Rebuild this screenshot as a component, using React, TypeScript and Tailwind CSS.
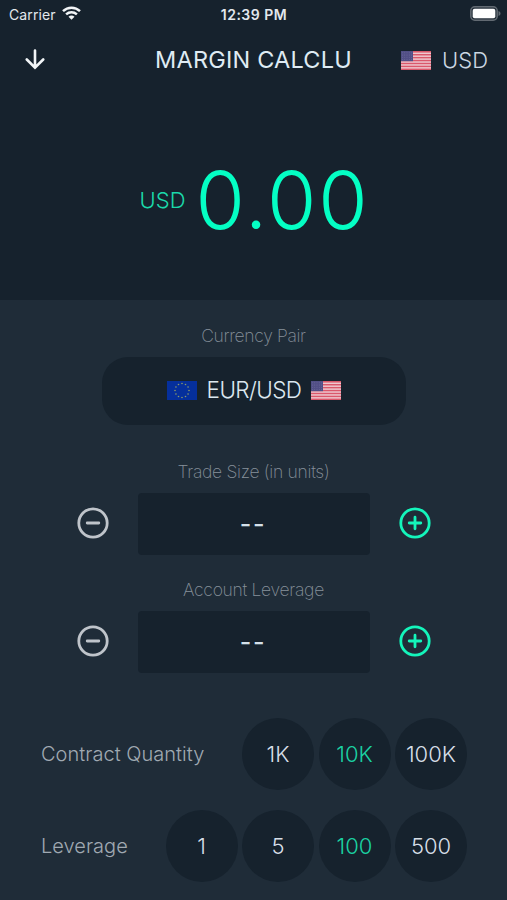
import React from "react";

const stripes = [0, 1, 2, 3, 4, 5, 6];

function UsFlag() {
  return (
    <svg width="30" height="19" viewBox="0 0 30 19" className="block shrink-0">
      <rect width="30" height="19" fill="#f0d3d9" />
      {stripes.map((i) => (
        <rect key={i} y={i * 2.923} width="30" height="1.6" fill="#da586b" />
      ))}
      <rect width="12" height="10.2" fill="#514f86" />
      {[1.8, 4, 6.2, 8.4].map((y) =>
        [1.5, 3.75, 6, 8.25, 10.5].map((x) => (
          <circle key={`${x}-${y}`} cx={x} cy={y} r="0.4" fill="#8583ab" />
        )),
      )}
    </svg>
  );
}

function EuFlag() {
  return (
    <svg width="30" height="19" viewBox="0 0 30 19" className="block shrink-0">
      <rect width="30" height="19" fill="#052f9c" />
      {stripes.concat([7, 8, 9, 10, 11]).map((i) => (
        <circle
          key={i}
          cx={15 + 7 * Math.sin((i * Math.PI) / 6)}
          cy={9.5 - 7 * Math.cos((i * Math.PI) / 6)}
          r="0.8"
          fill="#8c9a68"
        />
      ))}
    </svg>
  );
}

function RoundIcon({ plus }: { plus?: boolean }) {
  return (
    <svg
      width="32"
      height="32"
      viewBox="0 0 32 32"
      fill="none"
      strokeWidth="2.8"
      strokeLinecap="round"
      className={plus ? "block stroke-[#14f5bb]" : "block stroke-[#bfc4ca]"}
    >
      <circle cx="16" cy="16" r="14.2" />
      <path d={plus ? "M10.2 16H21.8M16 10.2V21.8" : "M10.2 16H21.8"} />
    </svg>
  );
}

function Stepper({ label }: { label: string }) {
  return (
    <section>
      <div className="flex h-[42px] items-center justify-center pt-[1px] text-[17.5px] font-extralight tracking-[-0.3px] text-[#87919b]">
        {label}
      </div>
      <div className="flex h-[62px] items-center justify-between pl-[77px] pr-[76px]">
        <button className="-mt-[3px]"><RoundIcon /></button>
        <div className="flex h-[62px] w-[232px] items-center justify-center rounded-[4px] bg-[#16222d] pr-[2px] pt-[1px] text-[25px] font-medium text-[#d5e1ea]">
          <span className="tracking-[1.8px]">--</span>
        </div>
        <button className="-mt-[3px]"><RoundIcon plus /></button>
      </div>
    </section>
  );
}

function Choices({ label, items, active }: { label: string; items: string[]; active: string }) {
  return (
    <div className="flex h-[72px] items-center pl-[41px] pr-[40px]">
      <span className="flex-1 text-[20px] font-[350] tracking-[0.02px] text-[#a0a9b2]">{label}</span>
      <div className="flex gap-[4.5px]">
        {items.map((item) => (
          <button
            key={item}
            className={`flex h-[72px] w-[72px] items-center justify-center rounded-full bg-[#16222d] text-[22px] font-[350] tracking-[0px] ${
              item === active ? "text-[#1bd3a3]" : "text-[#d7dfe8]"
            }`}
          >
            {item}
          </button>
        ))}
      </div>
    </div>
  );
}

export default function App() {
  return (
    <div className="flex h-[900px] w-[507px] flex-col overflow-hidden bg-[#1f2c38] font-['Inter','Liberation_Sans',sans-serif]">
      <div className="h-[300px] bg-[#16222d]">
        <div className="grid h-7 grid-cols-3 items-center pl-[7px] pr-[6px] text-[#e3e8ed]">
          <div className="flex items-center gap-[6px] pl-[2px] text-[14px] tracking-[0.1px]">
            <span>Carrier</span>
            <svg width="19" height="14" viewBox="0 0 19 14" fill="none" stroke="#f2f5f7" strokeWidth="2.5" className="-mt-[2px]">
              <path d="M1 5.2C5.8.6 13.2.6 18 5.2M4.1 8.4C7.2 5.6 11.8 5.6 14.9 8.4" />
              <path d="M6.5 10.8C8.2 9.2 10.8 9.2 12.5 10.8L9.5 13.8Z" fill="#f2f5f7" stroke="none" />
            </svg>
          </div>
          <span className="text-center text-[14px] font-semibold tracking-[0.5px]">12:39 PM</span>
          <svg width="31" height="15" viewBox="0 0 31 15" className="-mt-[2px] justify-self-end">
            <rect x="0.8" y="0.8" width="26.4" height="13.4" rx="4" fill="#26313b" stroke="#626a72" strokeWidth="1.5" />
            <rect x="2.7" y="2.7" width="22.6" height="9.6" rx="2" fill="#fff" />
            <path d="M28.5 5C31.2 6 31.2 9 28.5 10Z" fill="#626a72" />
          </svg>
        </div>
        <header className="grid h-16 grid-cols-[120px_267px_120px] items-center">
          <svg width="20" height="21" viewBox="0 0 20 21" fill="none" stroke="#f2f5f7" strokeWidth="2.6" strokeLinecap="round" className="ml-[25px] -mt-[1px]">
            <path d="M10 1.5V18.5M1.8 10.5L10 18.7L18.2 10.5" />
          </svg>
          <h1 className="text-center text-[23.5px] tracking-[0.2px] text-[#dfebf3]">MARGIN CALCLU</h1>
          <div className="flex items-center justify-end gap-[11px] pr-[19px] text-[22px] font-light text-[#cbd7e2]">
            <UsFlag />
            <span>USD</span>
          </div>
        </header>
        <div className="flex h-[216px] items-center justify-center text-[#04ffc4]">
          <span className="mr-[10px] text-[22px] font-light text-[#1bd9aa]">USD</span>
          <span className="-mr-[2px] text-[80px] font-[350] leading-none tracking-[1.8px]">0.00</span>
        </div>
      </div>
      <section className="flex flex-col items-center pt-[15px]">
        <div className="flex h-[42px] items-center text-[17.5px] font-extralight tracking-[-0.35px] text-[#87919b]">Currency Pair</div>
        <button className="ml-[1px] flex h-[68px] w-[304px] items-center justify-center gap-[10px] rounded-[26px] bg-[#16222d] pb-[2px] text-[22.5px] font-[350] tracking-[-0.6px] text-[#dce8f0]">
          <EuFlag />
          <span>EUR/USD</span>
          <UsFlag />
        </button>
      </section>
      <div className="mt-[26px] flex flex-col gap-[14px]">
        <Stepper label="Trade Size (in units)" />
        <Stepper label="Account Leverage" />
      </div>
      <div className="mt-[45px] flex flex-col gap-[20px]">
        <Choices label="Contract Quantity" items={["1K", "10K", "100K"]} active="10K" />
        <Choices label="Leverage" items={["1", "5", "100", "500"]} active="100" />
      </div>
    </div>
  );
}
